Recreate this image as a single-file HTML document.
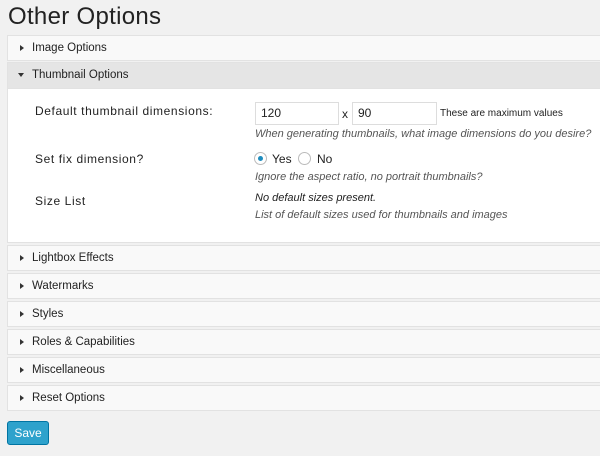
<!DOCTYPE html><html><head><style>
body{margin:0;background:#f1f1f1;font-family:"Liberation Sans",sans-serif;color:#222;width:600px;height:456px;overflow:hidden;position:relative;font-size:12px}
h1{position:absolute;left:8px;top:3px;margin:0;font-weight:normal;font-size:24px;letter-spacing:0.3px;color:#222}
.row{position:absolute;left:7px;width:600px;height:26px;background:#f9f9f9;border:1px solid #e2e2e2;box-sizing:border-box;line-height:24px;padding-left:24px;font-size:11.5px}
.row:before{content:"";position:absolute;left:12px;top:9px;border-left:4px solid #333;border-top:3.5px solid transparent;border-bottom:3.5px solid transparent}
.open{background:#e5e5e5}
.open:before{left:10px;top:10px;border-top:4px solid #333;border-left:3.5px solid transparent;border-right:3.5px solid transparent;border-bottom:0}
.content{position:absolute;left:7px;top:89px;width:600px;height:154px;background:#fff;border:1px solid #e2e2e2;border-top:0;box-sizing:border-box}
.a{position:absolute;white-space:nowrap}
.l{font-size:12px;letter-spacing:0.6px}
.i{font-style:italic;color:#555;font-size:11px}
.inp{position:absolute;height:23px;border:1px solid #ddd;box-sizing:border-box;background:#fff;padding-left:5px;line-height:21px}
.rad{position:absolute;width:13px;height:13px;border:1px solid #bbb;border-radius:50%;box-sizing:border-box;background:#fff}
.btn{position:absolute;left:7px;top:421px;width:42px;height:24px;background:#2ea2cc;border:1px solid #0074a2;border-radius:3px;box-sizing:border-box;color:#fff;text-align:center;line-height:22px;font-size:12px}
</style></head><body>
<h1>Other Options</h1>
<div class="row" style="top:35px">Image Options</div>
<div class="row open" style="top:62px;height:27px">Thumbnail Options</div>
<div class="content"></div>
<div class="a l" style="left:35px;top:104px">Default thumbnail dimensions:</div>
<div class="inp" style="left:255px;top:102px;width:84px">120</div>
<div class="a" style="left:342px;top:107px">x</div>
<div class="inp" style="left:352px;top:102px;width:85px">90</div>
<div class="a" style="left:440px;top:108px;font-size:10px">These are maximum values</div>
<div class="a i" style="left:255px;top:128px">When generating thumbnails, what image dimensions do you desire?</div>
<div class="a l" style="left:35px;top:152px">Set fix dimension?</div>
<div class="rad" style="left:254px;top:152px"><div style="position:absolute;left:3px;top:3px;width:5px;height:5px;border-radius:50%;background:#1e8cbe"></div></div>
<div class="a" style="left:272px;top:152px">Yes</div>
<div class="rad" style="left:298px;top:152px"></div>
<div class="a" style="left:317px;top:152px">No</div>
<div class="a i" style="left:255px;top:171px">Ignore the aspect ratio, no portrait thumbnails?</div>
<div class="a l" style="left:35px;top:194px">Size List</div>
<div class="a i" style="left:255px;top:192px;color:#222">No default sizes present.</div>
<div class="a i" style="left:255px;top:209px">List of default sizes used for thumbnails and images</div>
<div class="row" style="top:245px">Lightbox Effects</div>
<div class="row" style="top:273px">Watermarks</div>
<div class="row" style="top:301px">Styles</div>
<div class="row" style="top:329px">Roles &amp; Capabilities</div>
<div class="row" style="top:357px">Miscellaneous</div>
<div class="row" style="top:385px">Reset Options</div>
<div class="btn">Save</div>
</body></html>
